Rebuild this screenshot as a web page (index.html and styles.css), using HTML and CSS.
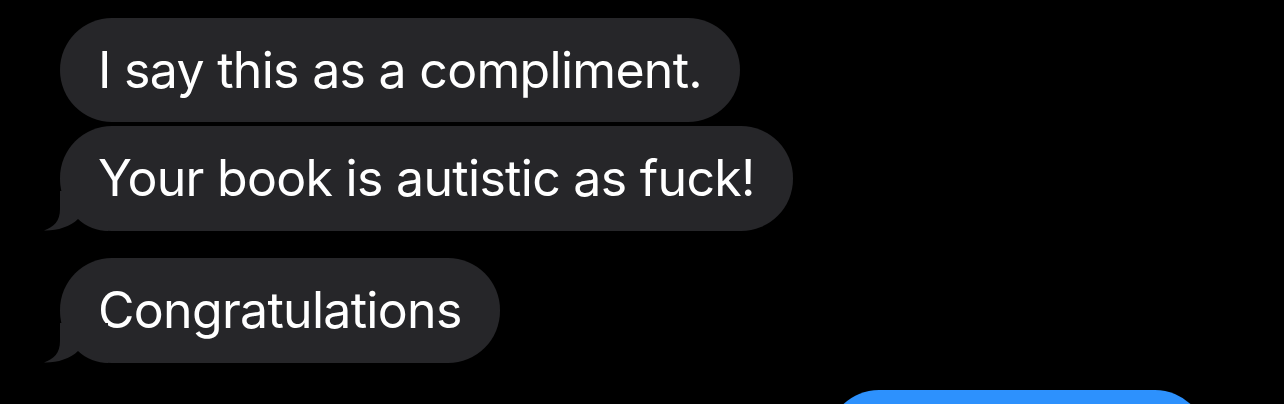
FILE: index.html
```html
<!DOCTYPE html>
<html lang="en">

<head>
    <meta charset="UTF-8">
    <meta name="viewport" content="width=device-width, initial-scale=1.0">
    <title>Messages</title>
    <link rel="stylesheet" href="styles.css">
</head>

<body>
    <div class="thread">
        <div class="group">
            <div class="bubble received">I say this as a compliment.</div>
            <div class="bubble received has-tail">Your book is autistic as fuck!
                <svg class="tail" width="64" height="40" viewBox="0 0 64 40">
                    <path d="M16 0 L16 18 C16 30 10 36 0 39.5 C12 40 26 36 34 28 C42 36 54 40 64 40 L64 0 Z" fill="#262629" />
                </svg>
            </div>
        </div>
        <div class="group">
            <div class="bubble received has-tail">Congratulations
                <svg class="tail" width="64" height="40" viewBox="0 0 64 40">
                    <path d="M16 0 L16 18 C16 30 10 36 0 39.5 C12 40 26 36 34 28 C42 36 54 40 64 40 L64 0 Z" fill="#262629" />
                </svg>
            </div>
        </div>
        <div class="group sent-group">
            <div class="bubble sent"></div>
        </div>
    </div>
</body>

</html>
```

FILE: styles.css
```css
body {
    margin: 0;
    padding: 0;
    background-color: #000;
    font-family: Inter, "Noto Sans", sans-serif;
    overflow: hidden;
}

.thread {
    display: flex;
    flex-direction: column;
    gap: 27px;
    height: 404px;
    box-sizing: border-box;
    overflow: hidden;
    padding: 18px 77px 0 60px;
}

.group {
    display: flex;
    flex-direction: column;
    align-items: flex-start;
    gap: 4px;
    flex-shrink: 0;
}

.sent-group {
    align-items: flex-end;
}

.bubble {
    position: relative;
    flex-shrink: 0;
    height: 104px;
    line-height: 104px;
    padding: 0 38px;
    border-radius: 52px;
    font-size: 50px;
    letter-spacing: -0.7px;
    color: #fff;
    white-space: nowrap;
}

.received {
    background-color: #262629;
}

.has-tail {
    height: 105px;
}

.tail {
    position: absolute;
    left: -16px;
    bottom: 0;
    display: block;
}

.sent {
    width: 380px;
    padding: 0;
    background-color: #2d91fd;
}
```
